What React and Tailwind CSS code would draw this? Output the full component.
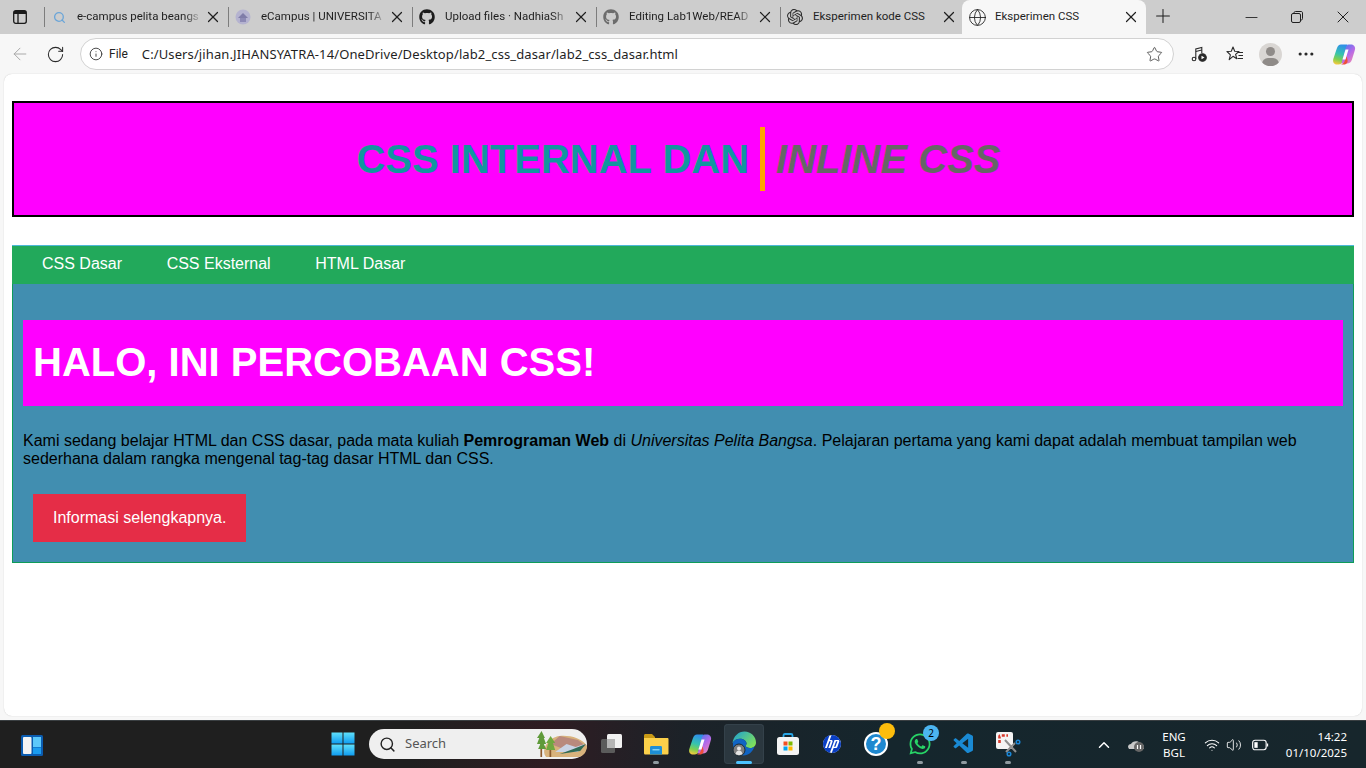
import React from "react";
import { ArrowLeft, RotateCw, Info, Star, X, Plus, Minus, Globe, Search, ChevronUp, Wifi, Volume2, Ellipsis } from "lucide-react";
import { FaGithub, FaWhatsapp } from "react-icons/fa";
import { SiOpenai, SiHp } from "react-icons/si";
import { VscVscode } from "react-icons/vsc";

const tabs = [
  { title: "e-campus pelita beangs", icon: "search" },
  { title: "eCampus | UNIVERSITA", icon: "campus" },
  { title: "Upload files · NadhiaSh", icon: "github" },
  { title: "Editing Lab1Web/READ", icon: "github2" },
  { title: "Eksperimen kode CSS", icon: "openai", plain: true },
];

function TabIcon({ kind }) {
  if (kind === "search") return <Search className="h-[13px] w-[13px] text-[#6aa5d8]" strokeWidth={2.4} />;
  if (kind === "github") return <FaGithub className="h-4 w-4 text-[#1c1c1c]" />;
  if (kind === "github2") return <FaGithub className="h-4 w-4 text-[#6c6c6c]" />;
  if (kind === "openai") return <SiOpenai className="h-4 w-4 text-[#2e2e2e]" />;
  return (
    <svg viewBox="0 0 16 16" className="h-4 w-4">
      <circle cx="8" cy="8" r="7.5" fill="#b5b3d0" />
      <path d="M3 9l5-5 5 5z" fill="#7f7ca8" />
      <rect x="5" y="9" width="6" height="4" fill="#8d8ab5" />
    </svg>
  );
}

function Tab({ tab }) {
  return (
    <div className="relative flex h-full w-[184px] shrink-0 items-center">
      <div className="absolute left-0 top-[7px] h-5 w-px bg-[#7d7d7d]" />
      <div className="ml-[7px] flex w-4 justify-center"><TabIcon kind={tab.icon} /></div>
      <div className={`ml-[10px] w-[125px] overflow-hidden whitespace-nowrap font-['Roboto',sans-serif] text-[11.5px] text-[#1f1f1f] ${tab.plain ? "" : "[mask-image:linear-gradient(90deg,#000_86%,transparent_100%)]"}`}>
        {tab.title}
      </div>
      <X className="ml-[2px] h-[18px] w-[18px] text-[#1f1f1f]" strokeWidth={1.6} />
    </div>
  );
}

function CopilotIcon({ size, id }) {
  return (
    <svg viewBox="0 0 24 24" width={size} height={size}>
      <defs>
        <linearGradient id={id + "a"} x1="0.5" y1="0" x2="0.3" y2="1">
          <stop offset="0" stopColor="#2f8fe8" />
          <stop offset="0.45" stopColor="#35c3b0" />
          <stop offset="0.75" stopColor="#7fd04f" />
          <stop offset="1" stopColor="#f6c83c" />
        </linearGradient>
        <linearGradient id={id + "b"} x1="0.2" y1="0" x2="0.9" y2="1">
          <stop offset="0" stopColor="#4a78f0" />
          <stop offset="0.5" stopColor="#b56ae8" />
          <stop offset="1" stopColor="#f58ab0" />
        </linearGradient>
      </defs>
      <path d="M9 2.500h6.500L10.500 19.500c-.6 2.200-2 3-3.800 3H5C2 22.500.5 20 1.300 17L4.800 6.500C5.700 3.800 7 2.500 9 2.500z" fill={`url(#${id}a)`} />
      <path d="M15 21.500H9.500L14 5c.6-2 2-2.500 3.500-2.500H19c3 0 4.700 2.500 3.900 5.500L20 17.500c-.9 2.800-2.500 4-5 4z" fill={`url(#${id}b)`} />
      <path d="M8 22.500c2.500 0 4-1.500 4.700-3.500l1.800-5 1 4c.5 2.200-.5 3.500-2.500 4.500z" fill="#ef4f3a" />
      <path d="M13.500 7.500h3l-3 10h-3z" fill="#fff" />
    </svg>
  );
}

function WindowsLogo() {
  return (
    <svg viewBox="0 0 24 24" className="h-6 w-6">
      <defs>
        <linearGradient id="win" x1="0" y1="0" x2="0" y2="1">
          <stop offset="0" stopColor="#5fe0fb" />
          <stop offset="1" stopColor="#0f9cf0" />
        </linearGradient>
      </defs>
      <rect x="0.500" y="0.500" width="11" height="11" fill="url(#win)" />
      <rect x="12.500" y="0.500" width="11" height="11" fill="url(#win)" />
      <rect x="0.500" y="12.500" width="11" height="11" fill="url(#win)" />
      <rect x="12.500" y="12.500" width="11" height="11" fill="url(#win)" />
    </svg>
  );
}

function WidgetsIcon() {
  return (
    <svg viewBox="0 0 24 24" className="h-6 w-6">
      <rect x="1" y="2" width="22" height="21" rx="1.500" fill="#0b5cb0" />
      <rect x="3" y="4" width="8.500" height="17" rx="1" fill="#f3f3f3" />
      <rect x="13" y="4" width="8" height="10" fill="#5cc8fa" />
      <rect x="13" y="14.500" width="8" height="6.500" fill="#1a9cf0" />
    </svg>
  );
}

function SearchScene() {
  return (
    <svg viewBox="0 0 44 28" preserveAspectRatio="none" className="h-7 w-[50px]">
      <path d="M8 27C3 20 10 7 20 6c8-1 20 2 24 10 0 5-3 11-8 11z" fill="#d8b27c" />
      <path d="M12 14l8-8 8 2 8 2 7 6-10 3-12-1z" fill="#b9897d" />
      <path d="M16 22l10-8 8 3 8-3-6 8z" fill="#c9d2e4" />
      <path d="M20 24l12-5 11-5-5 7z" fill="#2f6a55" />
      <rect x="3" y="10" width="1.500" height="17" fill="#8c5a2e" />
      <rect x="11" y="13" width="1.500" height="14" fill="#8c5a2e" />
      <path d="M4 1L0 8h2L0 14h3L1 19h7l-2-5h2L6 8h1z" fill="#5f9a3a" />
      <path d="M12 6L8 13h2l-2 7h8l-2-7h2z" fill="#6fa83f" />
    </svg>
  );
}

function TaskViewIcon() {
  return (
    <svg viewBox="0 0 24 24" className="h-6 w-6">
      <rect x="1" y="7" width="14" height="14" rx="1.500" fill="#5b5b5b" />
      <rect x="7" y="2" width="15" height="14" rx="1.500" fill="#f1f1f1" />
      <rect x="7" y="7" width="8" height="9" fill="#b4b4b4" />
    </svg>
  );
}

function ExplorerIcon() {
  return (
    <svg viewBox="0 0 26 24" className="h-6 w-[26px]">
      <path d="M1 3.500C1 2.500 1.700 2 2.500 2H9l3 3v3H1z" fill="#c99a16" />
      <path d="M1 6h23.500c.5 0 1 .5 1 1v14c0 1-.5 1.500-1.500 1.500H2.500C1.500 22.500 1 22 1 21z" fill="#fbd04a" />
      <path d="M7 15.500c0-1 .5-1.500 1.500-1.500h9c1 0 1.500.5 1.500 1.500v7H7z" fill="#1d8fd6" />
      <rect x="9.500" y="17" width="7" height="1.500" fill="#7fd0f5" />
    </svg>
  );
}

function EdgeIcon() {
  return (
    <svg viewBox="0 0 26 26" className="h-[26px] w-[26px]">
      <defs>
        <linearGradient id="edgeA" x1="0" y1="0" x2="1" y2="0.700">
          <stop offset="0" stopColor="#1a9fd8" />
          <stop offset="1" stopColor="#7fe05a" />
        </linearGradient>
      </defs>
      <path d="M1.500 12C2.500 5 7.500.5 13.500.5 20 .5 25 5.500 25 11.500c0 3.500-2.500 5.500-6 5.500-2.500 0-4.500-1-4.500-2.500 1.500-1 1.500-3-.5-5-3-3-10-2.500-12.500 2.500z" fill="url(#edgeA)" />
      <path d="M1.500 12C4 7 11 6.500 14 9.500c2 2 2 4 .5 5 0 1.500 2 2.500 4.500 2.500 2 0 3.500-.7 4.500-1.500-1.500 5-6 9-11 9-6 0-11-5-10.500-12.500z" fill="#1064c4" />
      <circle cx="8" cy="19" r="6" fill="#7e7e7e" stroke="#1b2a33" strokeWidth="1" />
      <circle cx="8" cy="17.500" r="2" fill="#e4e4e4" />
      <path d="M4.500 23c.5-2.500 2-3.500 3.500-3.500s3 1 3.500 3.500c-2 1.500-5 1.500-7 0z" fill="#e4e4e4" />
    </svg>
  );
}

function StoreIcon() {
  return (
    <svg viewBox="0 0 24 24" className="h-6 w-6">
      <path d="M7.500 6V3.500C7.500 2.500 8 2 9 2h6c1 0 1.500.5 1.500 1.500V6" fill="none" stroke="#29a6e6" strokeWidth="1.800" />
      <rect x="1" y="5" width="22" height="18" rx="2.500" fill="#f4f4f4" />
      <rect x="7.500" y="9.500" width="4" height="4" fill="#f25022" />
      <rect x="12.500" y="9.500" width="4" height="4" fill="#7fba00" />
      <rect x="7.500" y="14.500" width="4" height="4" fill="#00a4ef" />
      <rect x="12.500" y="14.500" width="4" height="4" fill="#ffb900" />
    </svg>
  );
}

function HelpIcon() {
  return (
    <div className="relative h-6 w-6">
      <div className="flex h-6 w-6 items-center justify-center rounded-full border-2 border-white bg-[#1e88cf] font-['Liberation_Sans',sans-serif] text-lg font-bold leading-none text-white">?</div>
      <div className="absolute -right-[7px] -top-[9px] h-4 w-4 rounded-full bg-[#fdbd0c]" />
    </div>
  );
}

function SnipIcon() {
  return (
    <svg viewBox="0 0 26 26" className="h-[26px] w-[26px]">
      <rect x="1" y="1" width="17" height="17" rx="2" fill="#f4f4f4" />
      <path d="M4.500 12V5.500C4.500 4.800 4.800 4.500 5.500 4.500H13" fill="none" stroke="#d8392b" strokeWidth="2.600" strokeDasharray="3 1.600" />
      <path d="M10 9l11 12M11 21l9-9" stroke="#8f8f8f" strokeWidth="2" />
      <circle cx="23" cy="11" r="1.800" fill="none" stroke="#1a86d6" strokeWidth="1.500" />
      <circle cx="14" cy="23" r="1.800" fill="none" stroke="#1a86d6" strokeWidth="1.500" />
    </svg>
  );
}

function MediaIcon() {
  return (
    <svg viewBox="0 0 18 18" className="h-[18px] w-[18px]" fill="none" stroke="#2a2a2a" strokeWidth="1.100">
      <circle cx="4" cy="14" r="1.800" />
      <path d="M5.800 14V4l6-1.500V8" />
      <path d="M5.800 6.500l6-1.500" />
      <circle cx="12.500" cy="12.500" r="3.800" fill="#2a2a2a" />
      <path d="M11.500 10.700v3.600l3-1.800z" fill="#fff" stroke="none" />
    </svg>
  );
}

function FavoritesIcon() {
  return (
    <svg viewBox="0 0 18 18" className="h-[18px] w-[18px]" fill="none" stroke="#2a2a2a" strokeWidth="1.100" strokeLinejoin="round">
      <path d="M7 2l1.700 4.300 4.300.2-3.400 2.800 1.200 4.400L7 11.300 3.200 14.700l1.200-4.900L1 6.500l4.300-.2z" />
      <path d="M12 7.500h5M12.500 10.500h4.500M11.500 13.500h5.500" />
    </svg>
  );
}

function TaskItem({ children, dot, active }) {
  return (
    <div className={`relative mx-[2px] flex h-10 w-10 items-center justify-center rounded ${active ? "bg-[#2b373f] shadow-[inset_0_0_0_1px_#34414a]" : ""}`}>
      {children}
      {dot && <div className="absolute bottom-0 left-1/2 h-[3px] w-[6px] -translate-x-1/2 rounded-full bg-[#8f9aa0]" />}
      {active && <div className="absolute bottom-0 left-1/2 h-[3px] w-4 -translate-x-1/2 rounded-full bg-[#4cc2ff]" />}
    </div>
  );
}

function Titlebar() {
  return (
    <div className="flex h-[34px] shrink-0 items-stretch bg-[#cdcdcd] font-['Noto_Sans',sans-serif]">
      <div className="flex w-[44px] items-center pl-[13px]">
        <svg viewBox="0 0 14 14" className="h-[14px] w-[14px]" fill="none" stroke="#1a1a1a" strokeWidth="1.300">
          <rect x="0.700" y="0.700" width="12.600" height="12.600" rx="2" />
          <path d="M5 4v9.300" />
          <rect x="1" y="1" width="12" height="3" fill="#1a1a1a" stroke="none" />
        </svg>
      </div>
      {tabs.map((t) => <Tab key={t.title} tab={t} />)}
      <div className="-ml-[2px] flex w-[184px] shrink-0 items-center rounded-t-lg bg-[#f7f7f7]">
        <Globe className="ml-[6px] h-[19px] w-[19px] text-[#222]" strokeWidth={1.100} />
        <span className="ml-[8px] w-[127px] font-['Roboto',sans-serif] text-[11.5px] text-[#1f1f1f]">Eksperimen CSS</span>
        <X className="h-[18px] w-[18px] text-[#1f1f1f]" strokeWidth={1.6} />
      </div>
      <Plus className="ml-[6px] mt-[5px] h-[22px] w-[22px] text-[#1f1f1f]" strokeWidth={1.100} />
      <div className="ml-auto flex items-center">
        <div className="flex w-[46px] justify-center"><Minus className="h-[19px] w-[19px] text-[#1f1f1f]" strokeWidth={1.100} /></div>
        <div className="flex w-[46px] justify-center">
          <svg viewBox="0 0 12 12" className="h-3 w-3" fill="none" stroke="#1f1f1f" strokeWidth="1">
            <rect x="0.500" y="2.500" width="9" height="9" rx="1.500" />
            <path d="M3 2.500V2c0-1 .5-1.500 1.500-1.500H10c1 0 1.500.5 1.500 1.500v5.500c0 1-.5 1.500-1.500 1.500" />
          </svg>
        </div>
        <div className="flex w-[46px] justify-center"><X className="h-5 w-5 text-[#1f1f1f]" strokeWidth={1.200} /></div>
      </div>
    </div>
  );
}

function Toolbar() {
  return (
    <div className="flex h-10 shrink-0 items-center bg-[#f7f7f7] font-['Noto_Sans',sans-serif]">
      <ArrowLeft className="ml-[10px] h-5 w-5 text-[#a9a9a9]" strokeWidth={1.200} />
      <RotateCw className="ml-4 h-[19px] w-[19px] text-[#2a2a2a]" strokeWidth={1.300} />
      <div className="ml-[15px] flex h-8 w-[1094px] items-center rounded-full border border-[#d2d2d2] bg-white">
        <Info className="ml-2 h-[14px] w-[14px] text-[#333]" strokeWidth={1.500} />
        <span className="ml-[6px] font-['Roboto',sans-serif] text-xs text-[#222]">File</span>
        <span className="ml-[14px] pt-px text-[13px] tracking-[0.11px] text-[#1f1f1f]">C:/Users/jihan.JIHANSYATRA-14/OneDrive/Desktop/lab2_css_dasar/lab2_css_dasar.html</span>
        <Star className="ml-auto mr-[10px] h-[17px] w-[17px] text-[#444]" strokeWidth={1.200} />
      </div>
      <div className="ml-4"><MediaIcon /></div>
      <div className="ml-[18px]"><FavoritesIcon /></div>
      <div className="relative ml-[15px] h-[23px] w-[23px] overflow-hidden rounded-full bg-[#d9d6d3]">
        <div className="absolute left-[7px] top-1 h-[9px] w-[9px] rounded-full bg-[#8f8b88]" />
        <div className="absolute left-[3px] top-[15px] h-3 w-[17px] rounded-full bg-[#8f8b88]" />
      </div>
      <Ellipsis className="ml-[14px] h-5 w-5 text-[#2a2a2a]" strokeWidth={1.800} />
      <div className="ml-4"><CopilotIcon size={24} id="copA" /></div>
    </div>
  );
}

function Page() {
  return (
    <div className="min-h-0 flex-1 bg-[#f7f7f7] px-1 pb-1">
      <div className="h-full rounded-lg bg-white px-2 pt-[27px] font-['Liberation_Sans',sans-serif] shadow-[0_0_1px_#bbb]">
        <header className="flex h-[116px] items-center justify-center border-2 border-black bg-[#ff00ff] text-[40px] font-bold">
          <h1 className="text-[#12959f]">CSS INTERNAL DAN</h1>
          <span className="ml-[11px] mr-[9px] flex h-16 items-center border-l-[5px] border-[#ffa500] pl-[11px] italic text-[#666666]">INLINE CSS</span>
        </header>
        <nav className="mt-7 flex h-[39px] items-center gap-[44.6px] border-t border-[#4db8d8] bg-[#22a95b] pb-[2px] pl-[30px] text-base text-white">
          <a>CSS Dasar</a>
          <a>CSS Eksternal</a>
          <a>HTML Dasar</a>
        </nav>
        <main className="h-[279px] border border-t-0 border-[#0e9c58] bg-[#418eb0] px-[10px] pt-9">
          <h2 className="flex h-[86px] items-center bg-[#ff00ff] pb-[2px] pl-[10px] text-[40px] font-bold text-white">HALO, INI PERCOBAAN CSS!</h2>
          <p className="mt-[26px] text-base leading-[18px] text-black">
            Kami sedang belajar HTML dan CSS dasar, pada mata kuliah <b>Pemrograman Web</b> di <i>Universitas Pelita Bangsa</i>. Pelajaran pertama yang kami dapat adalah membuat tampilan web sederhana dalam rangka mengenal tag-tag dasar HTML dan CSS.
          </p>
          <button className="ml-[10px] mt-[26px] h-12 bg-[#e52d47] px-5 text-base text-white">Informasi selengkapnya.</button>
        </main>
      </div>
    </div>
  );
}

function Taskbar() {
  return (
    <div className="relative flex h-[48px] shrink-0 items-center justify-between border-t border-[#3a3f42] bg-[linear-gradient(90deg,#1f1f1f_0%,#1f1f1f_30%,#2f1c22_40%,#1c2228_50%,#15262d_65%,#17262c_100%)] font-['Noto_Sans',sans-serif] text-white">
      <div className="ml-[20px]"><WidgetsIcon /></div>
      <div className="absolute left-[321px] top-[3px] flex items-center">
        <TaskItem><WindowsLogo /></TaskItem>
        <div className="ml-[4px] mr-[3px] flex h-[30px] w-[218px] items-center rounded-full bg-[#efefef] pl-[10px] text-[#555]">
          <Search className="h-[17px] w-[17px] text-[#222]" strokeWidth={2} />
          <span className="ml-[9px] text-[13px]">Search</span>
          <div className="ml-auto"><SearchScene /></div>
        </div>
        <TaskItem><TaskViewIcon /></TaskItem>
        <TaskItem dot><ExplorerIcon /></TaskItem>
        <TaskItem><CopilotIcon size={24} id="copB" /></TaskItem>
        <TaskItem active><EdgeIcon /></TaskItem>
        <TaskItem><StoreIcon /></TaskItem>
        <TaskItem>
          <div className="flex h-[18px] w-[18px] items-center justify-center rounded-full bg-white">
            <SiHp className="h-[18px] w-[18px] text-[#0a3fc4]" />
          </div>
        </TaskItem>
        <TaskItem><HelpIcon /></TaskItem>
        <TaskItem dot>
          <FaWhatsapp className="h-6 w-6 text-[#27d366]" />
          <div className="absolute right-[1px] top-[1px] flex h-4 w-4 items-center justify-center rounded-full bg-[#4cb5f0] text-[10px] text-black">2</div>
        </TaskItem>
        <TaskItem dot><VscVscode className="h-6 w-6 text-[#1a8ad4]" /></TaskItem>
        <TaskItem dot><SnipIcon /></TaskItem>
      </div>
      <div className="flex items-center pr-[19px] text-[11.5px]">
        <ChevronUp className="h-[18px] w-[18px] text-white" strokeWidth={2} />
        <svg viewBox="0 0 18 14" className="ml-[14px] h-[14px] w-[18px]">
          <path d="M1 9c0-2 1.500-3 3-3 1-3 7-4 9-1 2 0 4 2 4 4v2H2z" fill="#c8c8c8" />
          <circle cx="12" cy="9" r="5" fill="#666" />
          <path d="M10.500 7v4M13.500 7v4" stroke="#fff" strokeWidth="1.200" />
        </svg>
        <div className="ml-[14px] w-[30px] text-center leading-4">ENG<br />BGL</div>
        <Wifi className="ml-[15px] h-4 w-4" strokeWidth={1.600} />
        <Volume2 className="ml-[6px] h-4 w-4" strokeWidth={1.300} />
        <svg viewBox="0 0 18 12" className="ml-[10px] h-3 w-[17px]" fill="none" stroke="#fff" strokeWidth="1.200">
          <rect x="0.700" y="1" width="14.300" height="10" rx="2.500" />
          <rect x="2.500" y="3" width="3.500" height="6" fill="#fff" stroke="none" />
          <path d="M16.500 4.500v3" />
        </svg>
        <div className="ml-[16px] w-[62px] whitespace-nowrap text-right leading-4">14:22<br />01/10/2025</div>
      </div>
    </div>
  );
}

export default function App() {
  return (
    <div className="flex h-[768px] w-[1366px] flex-col overflow-hidden bg-white">
      <Titlebar />
      <Toolbar />
      <Page />
      <Taskbar />
    </div>
  );
}
